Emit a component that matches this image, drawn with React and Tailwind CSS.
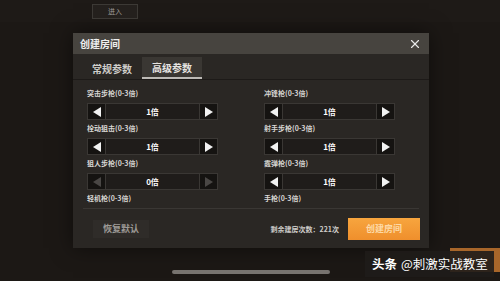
import { X } from "lucide-react";

const left = [
  { label: "突击步枪(0-3倍)", value: "1倍" },
  { label: "栓动狙击(0-3倍)", value: "1倍" },
  { label: "狙人步枪(0-3倍)", value: "0倍", min: true },
  { label: "轻机枪(0-3倍)" },
];

const right = [
  { label: "冲锋枪(0-3倍)", value: "1倍" },
  { label: "射手步枪(0-3倍)", value: "1倍" },
  { label: "霰弹枪(0-3倍)", value: "1倍" },
  { label: "手枪(0-3倍)" },
];

function Arrow({ dir, dim }) {
  return (
    <div className="flex h-full w-[19px] items-center justify-center border border-[#3a3734] bg-[#151311]">
      <svg width="8" height="10" viewBox="0 0 8 10">
        {dir === "left" ? (
          <path d="M8 0 L0 5 L8 10 Z" fill={dim ? "#4a4745" : "#f2f2f2"} />
        ) : (
          <path d="M0 0 L8 5 L0 10 Z" fill={dim ? "#4a4745" : "#f2f2f2"} />
        )}
      </svg>
    </div>
  );
}

function Stepper({ value, min }) {
  return (
    <div className="flex h-[17px] w-[131px]">
      <Arrow dir="left" dim={min} />
      <div className="flex flex-1 items-center justify-center border-y border-[#3a3734] bg-[#1f1c1a] text-[8px] font-bold text-white">
        {value}
      </div>
      <Arrow dir="right" dim={min} />
    </div>
  );
}

function Column({ items }) {
  return (
    <div className="flex w-[131px] flex-col">
      {items.map((item) => (
        <div key={item.label} className="mt-[3px] flex flex-col">
          <p className="h-[10px] text-[7px] leading-[10px] font-bold text-[#d8d6d3]">{item.label}</p>
          {item.value && (
            <div className="mt-[5px]">
              <Stepper value={item.value} min={item.min} />
            </div>
          )}
        </div>
      ))}
    </div>
  );
}

export default function App() {
  return (
    <div
      className="relative h-[281px] w-[500px] overflow-hidden bg-[#1c1815]"
      style={{ fontFamily: '"Noto Sans CJK SC", "Noto Sans", sans-serif' }}
    >
      <div className="flex h-[22px] items-center bg-[#1e1a17] pl-[92px]">
        <div className="flex h-[15px] w-[46px] items-center justify-center border border-[#3c3935] bg-[#24201d] text-[7px] text-[#9d9a96]">
          进入
        </div>
      </div>

      <div className="ml-[73px] mt-[11px] flex h-[215px] w-[356px] flex-col bg-[#2a2724] shadow-[0_0_20px_rgba(0,0,0,0.5)]">
        <div className="flex h-[21px] items-center justify-between bg-[#47443f] pl-[7px] pr-[7px]">
          <span className="text-[10px] font-bold text-[#eeeeee]">创建房间</span>
          <X className="h-[14px] w-[14px] text-[#e8e8e8]" strokeWidth={2} />
        </div>

        <div className="mt-[3px] flex h-[23px] border-b border-[#1d1a18] pl-[9px]">
          <div className="flex w-[60px] items-center justify-center text-[10px] font-bold text-[#cfcdca]">常规参数</div>
          <div className="flex w-[60px] items-center justify-center border-b-2 border-[#bdbab6] bg-[#3a3733] text-[10px] font-bold text-[#e6e4e1]">
            高级参数
          </div>
        </div>

        <div className="flex gap-[46px] pl-[14px] pt-[5px]">
          <Column items={left} />
          <Column items={right} />
        </div>

        <div className="mx-[10px] mt-[5px] h-px bg-[#3a3734]" />

        <div className="mt-[9px] flex items-center pl-[20px] pr-[9px]">
          <div className="flex h-[18px] w-[56px] items-center justify-center bg-[#2f2c29] text-[9px] font-bold text-[#9e9b97]">
            恢复默认
          </div>
          <div className="ml-auto text-[7px] font-bold text-[#cfcdca]">剩余建房次数：221次</div>
          <div className="ml-[9px] flex h-[22px] w-[72px] items-center justify-center bg-gradient-to-b from-[#f7a53e] to-[#ef8f2c] text-[9px] font-bold text-[#fdd9a6]">
            创建房间
          </div>
        </div>
      </div>

      <div className="ml-[172px] mt-[22px] h-[4px] w-[158px] rounded-full bg-[#77736f]" />

      <div className="absolute left-[450px] top-[248px] h-[24px] w-[50px] bg-[#a8662a]" />
      <div className="absolute left-[365px] top-[251px] flex h-[26px] w-[129px] items-center whitespace-nowrap bg-[#1f1c1a]/90 pl-[7px] text-[12.5px] leading-none text-white">
        <span className="font-bold">头条</span>
        <span className="ml-[4px]">@刺激实战教室</span>
      </div>
    </div>
  );
}
